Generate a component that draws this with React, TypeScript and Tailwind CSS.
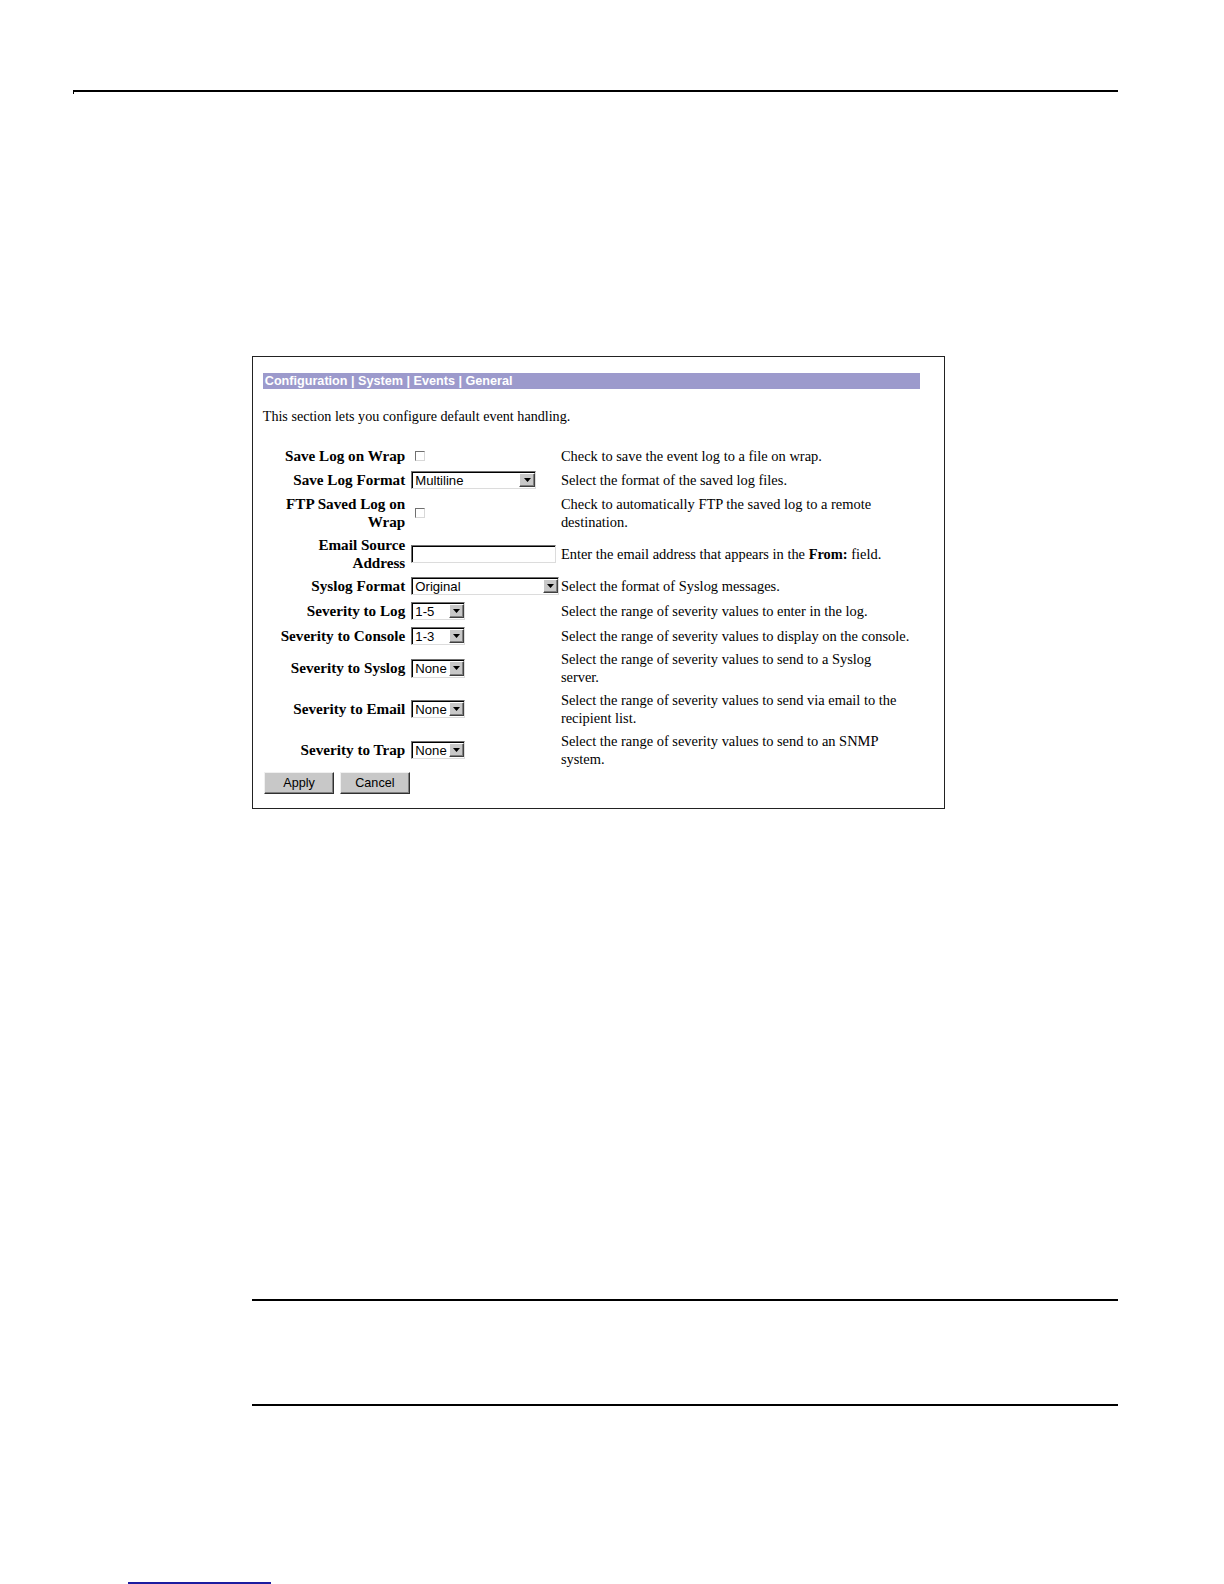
import type { ReactNode } from 'react'

const serif = { fontFamily: '"Liberation Serif", "Times New Roman", serif' }
const sans = { fontFamily: '"Liberation Sans", Arial, sans-serif' }

function Arrow() {
  return (
    <div className="flex h-[14px] w-[15px] items-center justify-center border border-t-white border-l-white border-b-[#404040] border-r-[#404040] bg-[#c8c8c8] shadow-[inset_-1px_-1px_0_#808080]">
      <svg width="7" height="4" viewBox="0 0 7 4">
        <path d="M0 0H7L3.5 4Z" fill="#000" />
      </svg>
    </div>
  )
}

function Select({ value, width }: { value: string; width: string }) {
  return (
    <div
      className={`flex h-[18px] items-center justify-between border border-t-[#707070] border-l-[#707070] border-b-[#dcdcdc] border-r-[#dcdcdc] bg-white shadow-[inset_1px_1px_0_#000] ${width}`}
    >
      <span className="pl-[3px] pt-[1px] text-[13px] leading-none text-black" style={sans}>
        {value}
      </span>
      <Arrow />
    </div>
  )
}

function Checkbox() {
  return (
    <div className="ml-[4px] h-[10px] w-[10px] border border-t-[#707070] border-l-[#707070] border-b-[#d8d8d8] border-r-[#d8d8d8] bg-white" />
  )
}

function Row({ label, control, desc, h }: { label: ReactNode; control: ReactNode; desc: ReactNode; h: string }) {
  return (
    <div className={`flex items-center ${h}`}>
      <div className="w-[143px] pr-[2px] text-right text-[15px] font-bold leading-[18px] text-black" style={serif}>
        {label}
      </div>
      <div className="flex w-[152px] items-center pl-[4px]">{control}</div>
      <div className="whitespace-nowrap text-[14.3px] leading-[18px] text-black" style={serif}>
        {desc}
      </div>
    </div>
  )
}

function Button({ children }: { children: ReactNode }) {
  return (
    <button
      className="flex h-[22px] w-[70px] items-center justify-center border border-t-[#f0f0f0] border-l-[#f0f0f0] border-b-[#303030] border-r-[#303030] bg-[#c8c8c8] text-[12.5px] text-black shadow-[inset_-1px_-1px_0_#808080]"
      style={sans}
    >
      {children}
    </button>
  )
}

export default function App() {
  return (
    <div className="h-[1567px] w-[1211px] overflow-hidden bg-white [zoom:1.0107]">
      <div className="ml-[72px] mt-[89px] h-[4px] w-[1034px] border-l border-t-2 border-black" />

      <div className="ml-[249px] mt-[259px] h-[448px] w-[686px] border border-[#222] pl-[10px] pt-[16px]">
        <div
          className="h-[16px] w-[650px] bg-[#9c9acc] pl-[2px] text-[12.5px] font-bold leading-[16px] text-white"
          style={sans}
        >
          Configuration | System | Events | General
        </div>

        <p className="mt-[18px] text-[14px] leading-[18px] text-black" style={serif}>
          This section lets you configure default event handling.
        </p>

        <div className="mt-[18px]">
          <Row h="h-[24px]" label="Save Log on Wrap" control={<Checkbox />} desc="Check to save the event log to a file on wrap." />
          <Row
            h="h-[24px]"
            label="Save Log Format"
            control={<Select value="Multiline" width="w-[123px]" />}
            desc="Select the format of the saved log files."
          />
          <Row
            h="h-[41px]"
            label={
              <>
                FTP Saved Log on
                <br />
                Wrap
              </>
            }
            control={<Checkbox />}
            desc={
              <>
                Check to automatically FTP the saved log to a remote
                <br />
                destination.
              </>
            }
          />
          <Row
            h="h-[40px]"
            label={
              <>
                Email Source
                <br />
                Address
              </>
            }
            control={
              <div className="h-[18px] w-[143px] border border-t-[#707070] border-l-[#707070] border-b-[#dcdcdc] border-r-[#dcdcdc] bg-white shadow-[inset_1px_1px_0_#000]" />
            }
            desc={
              <>
                Enter the email address that appears in the <b>From:</b> field.
              </>
            }
          />
          <Row
            h="h-[24px]"
            label="Syslog Format"
            control={<Select value="Original" width="w-[146px]" />}
            desc="Select the format of Syslog messages."
          />
          <Row
            h="h-[25px]"
            label="Severity to Log"
            control={<Select value="1-5" width="w-[53px]" />}
            desc="Select the range of severity values to enter in the log."
          />
          <Row
            h="h-[24px]"
            label="Severity to Console"
            control={<Select value="1-3" width="w-[53px]" />}
            desc="Select the range of severity values to display on the console."
          />
          <Row
            h="h-[41px]"
            label="Severity to Syslog"
            control={<Select value="None" width="w-[53px]" />}
            desc={
              <>
                Select the range of severity values to send to a Syslog
                <br />
                server.
              </>
            }
          />
          <Row
            h="h-[40px]"
            label="Severity to Email"
            control={<Select value="None" width="w-[53px]" />}
            desc={
              <>
                Select the range of severity values to send via email to the
                <br />
                recipient list.
              </>
            }
          />
          <Row
            h="h-[40px]"
            label="Severity to Trap"
            control={<Select value="None" width="w-[53px]" />}
            desc={
              <>
                Select the range of severity values to send to an SNMP
                <br />
                system.
              </>
            }
          />
        </div>

        <div className="mt-[2px] flex gap-[5px] pl-[1px]">
          <Button>Apply</Button>
          <Button>Cancel</Button>
        </div>
      </div>

      <div className="ml-[249px] mt-[485px] h-[2px] w-[857px] bg-black" />
      <div className="ml-[249px] mt-[102px] h-[2px] w-[857px] bg-black" />
      <div className="ml-[127px] mt-[174px] h-[2px] w-[141px] bg-[#1c1ca0]" />
    </div>
  )
}
